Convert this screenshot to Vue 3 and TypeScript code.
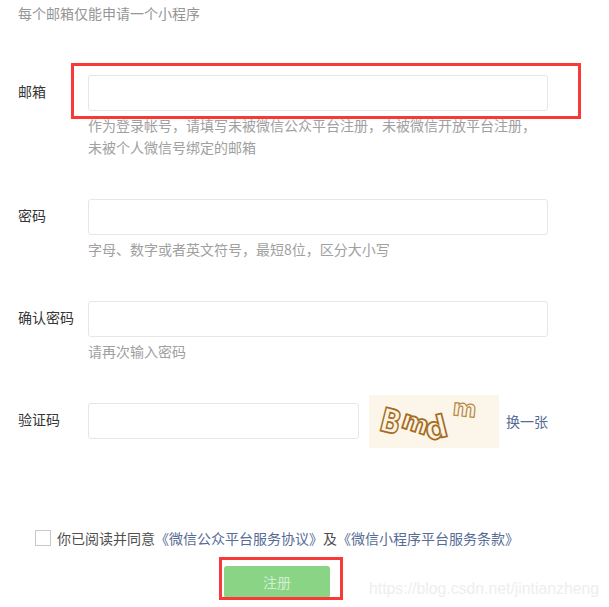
<script setup lang="ts">
interface Field {
  label: string;
  help: string[];
  gap: string;
}
const fields: Field[] = [
  { label: '邮箱', help: ['作为登录帐号，请填写未被微信公众平台注册，未被微信开放平台注册，', '未被个人微信号绑定的邮箱'], gap: 'first' },
  { label: '密码', help: ['字母、数字或者英文符号，最短8位，区分大小写'], gap: 'second' },
  { label: '确认密码', help: ['请再次输入密码'], gap: 'third' },
];
</script>

<template>
  <div class="page">
    <p class="intro">每个邮箱仅能申请一个小程序</p>

    <div v-for="f in fields" :key="f.label" class="row" :class="f.gap">
      <label class="label">{{ f.label }}</label>
      <div class="control">
        <input class="input" type="text" />
        <p v-for="line in f.help" :key="line" class="help">{{ line }}</p>
      </div>
    </div>

    <div class="row captcha-row">
      <label class="label">验证码</label>
      <div class="captcha-control">
        <input class="input short" type="text" />
        <svg class="captcha" viewBox="0 0 130 53" width="130" height="53">
          <rect width="130" height="53" fill="#fcf5ea" />
          <g class="cap-letters">
            <text font-size="33" transform="translate(9 35) rotate(14) scale(.82 1)">B</text>
            <text font-size="26" transform="translate(31 32) rotate(18)">m</text>
            <text font-size="31" transform="translate(59 46) rotate(-14)">d</text>
            <text class="cap-top" font-size="23" transform="translate(83 20) rotate(6)">m</text>
          </g>
        </svg>
        <a class="link swap">换一张</a>
      </div>
    </div>

    <div class="agree">
      <span class="checkbox"></span>
      <span class="agree-text">你已阅读并同意<a class="link">《微信公众平台服务协议》</a>及<a class="link">《微信小程序平台服务条款》</a></span>
    </div>

    <div class="actions">
      <button class="submit" type="button" disabled>注册</button>
    </div>

    <div class="mark mark-email"></div>
    <div class="mark mark-submit"></div>
    <div class="watermark">https://blog.csdn.net/jintianzheng</div>
  </div>
</template>

<style>
html, body { margin: 0; background: #fff; }
</style>

<style scoped>
.page {
  position: relative;
  width: 609px;
  height: 607px;
  overflow: hidden;
  box-sizing: border-box;
  padding: 3px 0 0 18px;
  background: #fff;
  font-family: "Noto Sans CJK SC", "Noto Sans", sans-serif;
  font-size: 14px;
  color: #353535;
}
.intro {
  margin: 0;
  line-height: 21px;
  color: #959595;
}
.row {
  display: flex;
  align-items: flex-start;
}
.first { margin-top: 51px; }
.second { margin-top: 41px; }
.third { margin-top: 41px; }
.captcha-row { margin-top: 41px; }
.label {
  width: 70px;
  flex: none;
  line-height: 32px;
}
.control { width: 460px; }
.input {
  display: block;
  box-sizing: border-box;
  width: 460px;
  height: 36px;
  margin: 0 0 3px;
  padding: 0 10px;
  background: #fff;
  border: 1px solid #e6e6e6;
  border-radius: 3px;
  outline: none;
}
.input.short {
  width: 271px;
  margin: 0;
  flex: none;
}
.help {
  margin: 0;
  line-height: 22px;
  color: #a0a0a0;
}
.captcha-control {
  display: flex;
  align-items: center;
  height: 36px;
}
.captcha {
  flex: none;
  margin: -8px 0 -9px 10px;
  overflow: visible;
}
.cap-letters text {
  font-family: "DejaVu Sans", sans-serif;
  font-weight: 700;
  fill: #fcf3e2;
  stroke: #a46c22;
  stroke-width: 1.7px;
}
.cap-letters .cap-top {
  stroke: #b58a48;
  stroke-width: 1.2px;
}
.link {
  color: #576b95;
  text-decoration: none;
}
.swap {
  margin-left: 7px;
  white-space: nowrap;
}
.agree {
  display: flex;
  align-items: center;
  margin: 90px 0 0 17px;
  height: 18px;
}
.checkbox {
  flex: none;
  box-sizing: border-box;
  width: 16px;
  height: 16px;
  margin-right: 6px;
  background: #fff;
  border: 1px solid #c9c9c9;
}
.agree-text {
  white-space: nowrap;
  color: #4f4f4f;
}
.actions {
  margin: 19px 0 0 206px;
}
.submit {
  display: block;
  width: 106px;
  height: 32px;
  padding: 0;
  border: none;
  border-radius: 3px;
  background: #8ad485;
  color: #d5eed2;
  font: inherit;
}
.mark {
  position: absolute;
  box-sizing: border-box;
  border: 3px solid #f93838;
}
.mark-email {
  left: 71px;
  top: 63px;
  width: 510px;
  height: 56px;
}
.mark-submit {
  left: 219px;
  top: 557px;
  width: 124px;
  height: 43px;
}
.watermark {
  position: absolute;
  left: 369px;
  top: 579px;
  font-family: "Liberation Sans", Arial, sans-serif;
  font-size: 15.8px;
  line-height: 20px;
  color: #eeeeee;
  white-space: nowrap;
}
</style>
